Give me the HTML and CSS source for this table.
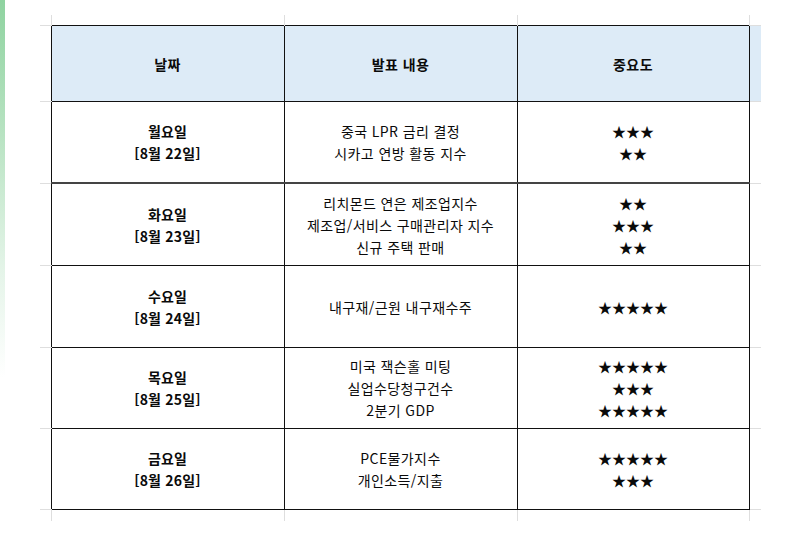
FILE: index.html
```html
<!DOCTYPE html>
<html lang="ko">
<head>
<meta charset="utf-8">
<title>주간 경제지표</title>
<link rel="stylesheet" href="styles.css">
</head>
<body>
<div class="edge"></div>
<main class="sheet">
  <table class="grid">
    <colgroup>
      <col class="c-side-l">
      <col class="c-main">
      <col class="c-main">
      <col class="c-last">
      <col class="c-side-r">
    </colgroup>
    <tr class="pad-top">
      <td class="gl"></td><td class="gv"></td><td class="gv"></td><td class="gv"></td><td class="gr"></td>
    </tr>
    <tr class="head">
      <td class="gl"></td>
      <th>날짜</th>
      <th>발표 내용</th>
      <th>중요도</th>
      <td class="gr blue"></td>
    </tr>
    <tr class="row r1">
      <td class="gl"></td>
      <td class="day">월요일<br>[8월 22일]</td>
      <td>중국 LPR 금리 결정<br>시카고 연방 활동 지수</td>
      <td class="stars">★★★<br>★★</td>
      <td class="gr"></td>
    </tr>
    <tr class="row r2">
      <td class="gl"></td>
      <td class="day">화요일<br>[8월 23일]</td>
      <td>리치몬드 연은 제조업지수<br>제조업/서비스 구매관리자 지수<br>신규 주택 판매</td>
      <td class="stars">★★<br>★★★<br>★★</td>
      <td class="gr"></td>
    </tr>
    <tr class="row r3">
      <td class="gl"></td>
      <td class="day">수요일<br>[8월 24일]</td>
      <td>내구재/근원 내구재수주</td>
      <td class="stars">★★★★★</td>
      <td class="gr"></td>
    </tr>
    <tr class="row r4">
      <td class="gl"></td>
      <td class="day">목요일<br>[8월 25일]</td>
      <td>미국 잭슨홀 미팅<br>실업수당청구건수<br>2분기 GDP</td>
      <td class="stars">★★★★★<br>★★★<br>★★★★★</td>
      <td class="gr"></td>
    </tr>
    <tr class="row r5">
      <td class="gl"></td>
      <td class="day">금요일<br>[8월 26일]</td>
      <td>PCE물가지수<br>개인소득/지출</td>
      <td class="stars">★★★★★<br>★★★</td>
      <td class="gr"></td>
    </tr>
    <tr class="pad-bottom">
      <td class="gl0"></td><td class="gv"></td><td class="gv"></td><td class="gv"></td><td class="gr0"></td>
    </tr>
  </table>
</main>
</body>
</html>
```

FILE: styles.css
```css
html, body {
  margin: 0;
  padding: 0;
  background: #ffffff;
}

body {
  display: flex;
  width: 800px;
  height: 539px;
  overflow: hidden;
  font-family: "Noto Sans CJK KR", "Noto Sans", sans-serif;
  color: #0a0a0a;
}

.edge {
  flex: 0 0 5px;
  background: linear-gradient(to bottom, #8fd3a0 0%, #b8e3c2 25%, #e4f4e8 50%, #ffffff 70%);
}

.sheet {
  padding: 15px 0 0 35px;
}

.grid {
  border-collapse: collapse;
  table-layout: fixed;
  width: 721px;
}

.c-side-l { width: 11px; }
.c-main { width: 233px; }
.c-last { width: 232px; }
.c-side-r { width: 12px; }

.grid td,
.grid th {
  padding: 0;
  text-align: center;
  vertical-align: middle;
  font-size: 14px;
  line-height: 22px;
  letter-spacing: 0.4px;
}

.pad-top td { height: 10px; }
.pad-bottom td { height: 11px; }

.gv {
  border-left: 1px solid #dedede;
  border-right: 1px solid #dedede;
}

.gl,
.gr {
  border-bottom: 1px solid #dedede;
}

.blue {
  background: #ddebf7;
}

.head th {
  height: 75px;
  background: #ddebf7;
  font-weight: 700;
  border: 1px solid #111111;
}

.row td:not(.gl):not(.gr) {
  border: 1px solid #111111;
}

.grid td.day {
  font-weight: 700;
  letter-spacing: 0.2px;
}

.r1 td { height: 80px; }
.r2 td { height: 81px; }
.r3 td { height: 81px; }
.r4 td { height: 80px; }
.r5 td { height: 80px; }

.r1 td:not(.gl):not(.gr) {
  border-bottom: 2px solid #444444;
}

.grid td.stars {
  letter-spacing: 0;
  font-size: 14px;
}
```
